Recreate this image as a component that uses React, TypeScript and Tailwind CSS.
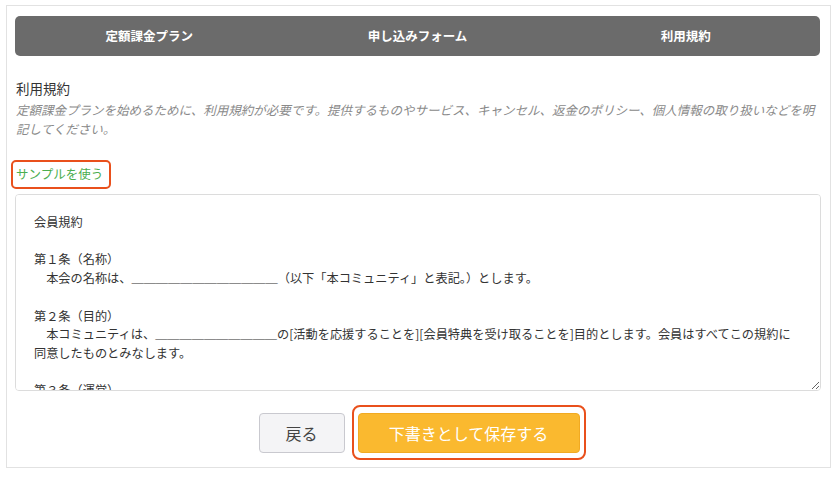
import React from "react";

const FONT = { fontFamily: '"Noto Sans CJK JP", "Noto Sans", sans-serif' };

const terms = `会員規約

第１条（名称）
　本会の名称は、＿＿＿＿＿＿＿＿＿＿＿＿（以下「本コミュニティ」と表記。）とします。

第２条（目的）
　本コミュニティは、＿＿＿＿＿＿＿＿＿＿の[活動を応援することを][会員特典を受け取ることを]目的とします。会員はすべてこの規約に同意したものとみなします。

第３条（運営）
　本コミュニティの運営は、＿＿＿＿＿＿＿＿＿＿＿が行います。

第４条（会員）
　本コミュニティの会員は、所定の手続きを経て入会した者とします。`;

export default function App() {
  const tabs = ["定額課金プラン", "申し込みフォーム", "利用規約"];
  return (
    <div className="min-h-[479px] w-[840px] bg-white pt-[5px] pl-[6px]" style={FONT}>
      <div className="flex h-[463px] w-[825px] flex-col border border-[#e2e2e2] px-[8px] pt-[10px]">
        <div className="flex h-[40px] w-[805px] items-center rounded-[5px] bg-[#6b6b6b]">
          {tabs.map((t) => (
            <div key={t} className="flex-1 text-center text-[12.5px] font-semibold text-white">
              {t}
            </div>
          ))}
        </div>

        <div className="mt-[22px] pl-[1px] text-[13.5px] leading-[20px] text-[#333]">利用規約</div>
        <div className="mt-[2px] w-[806px] pl-[1px] text-[12.5px] italic leading-[19px] text-[#8a8a8a]">
          定額課金プランを始めるために、利用規約が必要です。提供するものやサービス、キャンセル、返金のポリシー、個人情報の取り扱いなどを明記してください。
        </div>

        <div className="mt-[22px] pl-[1px]">
          <span className="relative inline-block text-[12.5px] leading-[20px] text-[#4cae4f]">
            サンプルを使う
            <span className="pointer-events-none absolute left-[-5px] right-[-8px] top-[-4px] bottom-[-5px] rounded-[5px] border-[2.5px] border-[#e9501c]" />
          </span>
        </div>

        <textarea
          readOnly
          value={terms}
          className="mt-[10px] h-[197px] w-[806px] rounded-[4px] border border-[#dcdcdc] bg-white pl-[18px] pr-[26px] pt-[18px] pb-[18px] text-[12.2px] leading-[18.7px] text-[#333] outline-none [scrollbar-width:none]"
          style={FONT}
        />

        <div className="mt-[22px] flex justify-center gap-[13px] pl-[1px]">
          <button className="h-[40px] w-[86px] rounded-[4px] border border-[#c9c9cf] bg-[#f4f4f6] text-[16px] text-[#444]">
            戻る
          </button>
          <div className="relative">
            <button className="h-[40px] w-[222px] rounded-[4px] border border-[#f1aa22] bg-[#fab92f] text-[16px] text-white">
              下書きとして保存する
            </button>
            <span className="pointer-events-none absolute left-[-6px] right-[-6px] top-[-8px] bottom-[-7px] rounded-[8px] border-[2.5px] border-[#e9501c]" />
          </div>
        </div>
      </div>
    </div>
  );
}
